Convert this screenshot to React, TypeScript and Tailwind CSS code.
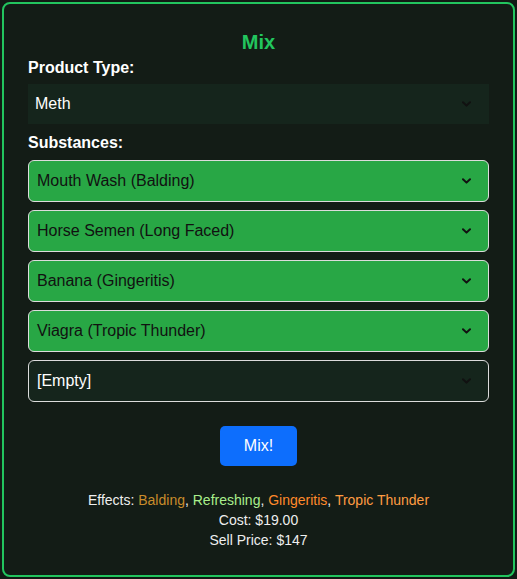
const substances = [
  { label: "Mouth Wash (Balding)", filled: true },
  { label: "Horse Semen (Long Faced)", filled: true },
  { label: "Banana (Gingeritis)", filled: true },
  { label: "Viagra (Tropic Thunder)", filled: true },
  { label: "[Empty]", filled: false },
];

const effects = [
  { name: "Balding", color: "text-[#c98c2b]" },
  { name: "Refreshing", color: "text-[#a9ef8c]" },
  { name: "Gingeritis", color: "text-[#ff8a2b]" },
  { name: "Tropic Thunder", color: "text-[#ff9c42]" },
];

function Chevron() {
  return (
    <svg width="9" height="6" viewBox="0 0 9 6" className="shrink-0">
      <polyline points="1,1.2 4.5,4.6 8,1.2" fill="none" stroke="#111" strokeWidth="2" strokeLinecap="round" strokeLinejoin="round" />
    </svg>
  );
}

export default function App() {
  return (
    <div
      className="min-h-[579px] bg-[#121a15] p-[2px]"
      style={{ fontFamily: '"Liberation Sans", Arial, sans-serif' }}
    >
      <div className="h-[575px] rounded-lg border-2 border-[#22c55e] bg-[#131c16] px-6 pt-6">
        <h2 className="text-center text-xl leading-7 font-bold text-[#22c55e]">Mix</h2>
        <div className="text-base leading-6 font-bold text-white">Product Type:</div>
        <div className="mt-1 flex h-10 items-center justify-between bg-[#15251c] pl-[7px] pr-[18px] text-white">
          <span>Meth</span>
          <Chevron />
        </div>

        <div className="mt-[7px] mb-[5px] text-base leading-6 font-bold text-white">Substances:</div>
        <div className="flex flex-col gap-2">
          {substances.map((s) => (
            <div
              key={s.label}
              className={`flex h-[42px] items-center justify-between rounded-md border border-[#dcdcdc] pl-2 pr-[17px] ${
                s.filled ? "bg-[#28a745] text-[#111]" : "bg-[#15251c] text-white"
              }`}
            >
              <span>{s.label}</span>
              <Chevron />
            </div>
          ))}
        </div>

        <div className="mt-6 flex justify-center">
          <button className="h-10 rounded-[5px] bg-[#0d6efd] px-6 text-base text-white">Mix!</button>
        </div>

        <div className="mt-6 text-center text-sm leading-5 text-[#eee]">
          <div>
            Effects:{" "}
            {effects.map((e, i) => (
              <span key={e.name}>
                <span className={e.color}>{e.name}</span>
                {i < effects.length - 1 ? ", " : ""}
              </span>
            ))}
          </div>
          <div>Cost: $19.00</div>
          <div>Sell Price: $147</div>
        </div>
      </div>
    </div>
  );
}
